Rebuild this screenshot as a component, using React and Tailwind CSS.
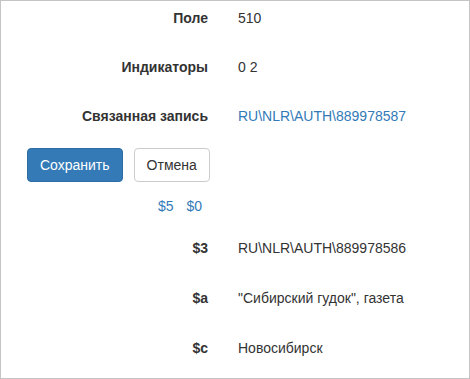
const fields = [
  { label: 'Поле', value: '510' },
  { label: 'Индикаторы', value: '0 2' },
  { label: 'Связанная запись', value: 'RU\\NLR\\AUTH\\889978587', link: true },
];

const subfields = [
  { code: '$3', value: 'RU\\NLR\\AUTH\\889978586' },
  { code: '$a', value: '"Сибирский гудок", газета' },
  { code: '$c', value: 'Новосибирск' },
];

const Row = ({ label, children, className = '' }) => (
  <div className={`flex leading-[20px] ${className}`}>
    <div className="w-[207px] shrink-0 text-right font-bold">{label}</div>
    <div className="pl-[30px]">{children}</div>
  </div>
);

export default function App() {
  return (
    <div
      className="w-[470px] h-[379px] border border-[#c4c4c4] bg-white text-[14px] text-[#333] overflow-hidden"
      style={{ fontFamily: '"Liberation Sans", Arial, sans-serif' }}
    >
      <div className="pt-[7px]">
        {fields.map((f) => (
          <Row key={f.label} label={f.label} className="h-[49px]">
            {f.link ? <a className="text-[#337ab7]">{f.value}</a> : f.value}
          </Row>
        ))}
      </div>

      <div className="flex gap-[11px] pl-[26px] mt-[-7px]">
        <button className="h-[34px] px-[12px] rounded-[4px] bg-[#337ab7] border border-[#2e6da4] text-white">
          Сохранить
        </button>
        <button className="h-[34px] px-[12px] rounded-[4px] bg-white border border-[#ccc] text-[#333]">
          Отмена
        </button>
      </div>

      <div className="flex gap-[13px] pl-[157px] mt-[14px] leading-[20px] text-[#337ab7]">
        <a>$5</a>
        <a>$0</a>
      </div>

      <div className="mt-[22px]">
        {subfields.map((s) => (
          <Row key={s.code} label={s.code} className="h-[50px]">
            {s.value}
          </Row>
        ))}
      </div>
    </div>
  );
}
